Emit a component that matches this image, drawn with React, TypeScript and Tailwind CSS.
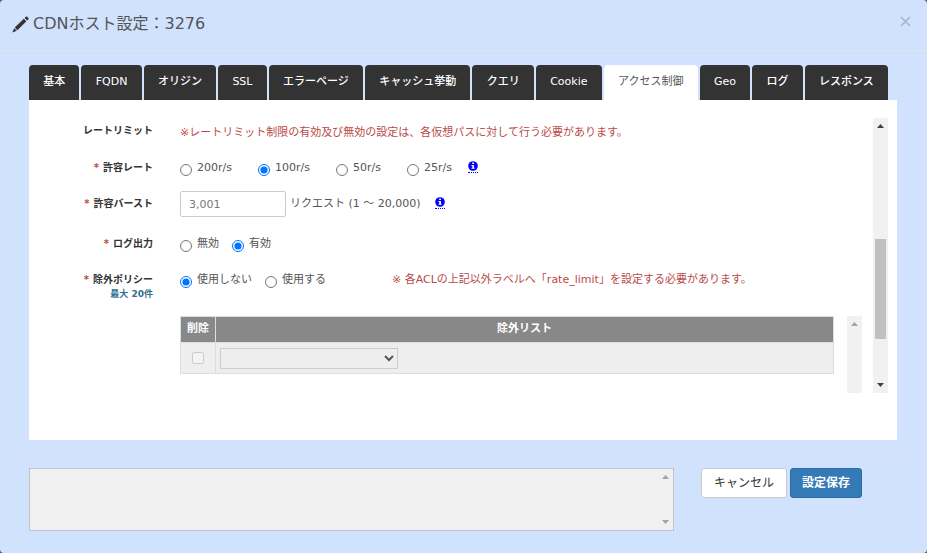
import React from 'react';

const tabs = [
  '基本',
  'FQDN',
  'オリジン',
  'SSL',
  'エラーページ',
  'キャッシュ挙動',
  'クエリ',
  'Cookie',
  'アクセス制御',
  'Geo',
  'ログ',
  'レスポンス',
];

const rates = ['200r/s', '100r/s', '50r/s', '25r/s'];

const PencilIcon = () => (
  <svg viewBox="0 0 17 17" className="w-[17px] h-[17px] shrink-0" fill="#333" aria-hidden="true">
    <path d="M12.600 1.900 13.800.7q.7-.6 1.400 0l1.200 1.200q.6.7 0 1.400l-1.200 1.200z" />
    <path d="M11.800 2.700 14.400 5.300 5.400 14.200 2.800 11.600z" />
    <path d="M2.200 12.200 4.800 14.800.3 16.500z" />
  </svg>
);

const InfoIcon = ({ label }: { label: string }) => (
  <button type="button" aria-label={label} className="border-b border-dotted border-[#0000ff] pb-px">
    <svg viewBox="0 0 10 10" className="w-[10px] h-[10px]">
      <circle cx="5" cy="5" r="4.800" fill="#0000ff" />
      <path d="M4.200 1.500h1.700v1.500H4.200zM3.500 3.900h2.400v2.800h.8v1.100H3.500V6.700h.8V5h-.8z" fill="#fff" />
    </svg>
  </button>
);

const Arrow = ({ up, color }: { up?: boolean; color: string }) => (
  <svg viewBox="0 0 7 4" className="w-[7px] h-1" fill={color} aria-hidden="true">
    <path d={up ? 'M3.500 0 7 4H0z' : 'M0 0h7L3.500 4z'} />
  </svg>
);

interface FieldProps {
  label: string;
  required?: boolean;
  note?: string;
  htmlFor?: string;
  className: string;
  children: React.ReactNode;
}

const Field = ({ label, required, note, htmlFor, className, children }: FieldProps) => (
  <div className={`flex items-start pt-[5px] ${className}`}>
    <div className="w-[124px] shrink-0 text-right text-[10px] leading-4 font-bold text-[#333]">
      <label htmlFor={htmlFor}>
        {required && <span className="text-[#b94a48] mr-1">*</span>}
        {label}
      </label>
      {note && <p className="text-[9px] leading-3 text-[#31708f]">{note}</p>}
    </div>
    <div className="flex-1 min-w-0 ml-[27px]">{children}</div>
  </div>
);

const Radio = ({ name, label, checked }: { name: string; label: string; checked?: boolean }) => (
  <label className="flex items-start gap-[5px]">
    <input type="radio" name={name} defaultChecked={checked} className="w-3 h-3 mt-1" />
    <span>{label}</span>
  </label>
);

export default function App() {
  return (
    <div className="bg-[#555]">
      <div className="min-h-screen bg-[#d1e2ff] rounded-sm font-['DejaVu_Sans','Noto_Sans_CJK_JP',sans-serif] text-[11px] leading-4 text-[#555]">
        {/* Header */}
        <header className="flex items-center justify-between h-[51px] pl-3 pr-4 pb-0.5 border-b border-[#e5e5e5]">
          <h1 className="flex items-center gap-1 text-base leading-6">
            <PencilIcon />
            CDNホスト設定：3276
          </h1>
          <button type="button" aria-label="閉じる" className="pb-1.5">
            <svg viewBox="0 0 11 11" className="w-[11px] h-[11px]" stroke="#a7b5cc" strokeWidth="1.600">
              <path d="M1 1l9 9M10 1l-9 9" />
            </svg>
          </button>
        </header>

        <main className="pl-[29px] pr-[30px] pt-3.5">
          {/* Tabs */}
          <nav className="flex gap-0.5 mr-[9px]">
            {tabs.map((tab) => (
              <button
                key={tab}
                type="button"
                className={`flex-auto h-[35px] pb-0.5 rounded-t whitespace-nowrap ${
                  tab === 'アクセス制御' ? 'bg-white text-[#555]' : 'bg-[#333] text-white font-medium'
                }`}
              >
                {tab}
              </button>
            ))}
          </nav>

          <section className="bg-white flex pt-[18px] pb-[47px] pr-[9px]">
            <div className="flex-1 min-w-0">
              <Field label="レートリミット" className="h-[37px]">
                <p className="text-[#b94a48] pt-0.5">
                  ※レートリミット制限の有効及び無効の設定は、各仮想パスに対して行う必要があります。
                </p>
              </Field>

              <Field label="許容レート" required className="h-9">
                <div className="flex gap-[26px]">
                  {rates.map((rate) => (
                    <Radio key={rate} name="rate" label={rate} checked={rate === '100r/s'} />
                  ))}
                  <div className="-ml-2.5">
                    <InfoIcon label="許容レートについて" />
                  </div>
                </div>
              </Field>

              <Field label="許容バースト" required htmlFor="burst" className="h-10">
                <div className="flex items-center gap-1 -mt-[5px]">
                  <input
                    id="burst"
                    type="text"
                    defaultValue="3,001"
                    className="w-[106px] h-[26px] px-2 border border-[#ccc] rounded-xs bg-white text-[#777]"
                  />
                  <span>リクエスト (1 ～ 20,000)</span>
                  <div className="ml-2.5">
                    <InfoIcon label="許容バーストについて" />
                  </div>
                </div>
              </Field>

              <Field label="ログ出力" required className="h-9">
                <div className="flex gap-[13px]">
                  <Radio name="log" label="無効" />
                  <Radio name="log" label="有効" checked />
                </div>
              </Field>

              <Field label="除外ポリシー" required note="最大 20件" className="h-[49px]">
                <div className="flex gap-[13px]">
                  <Radio name="policy" label="使用しない" checked />
                  <Radio name="policy" label="使用する" />
                  <p className="text-[#b94a48] ml-[53px]">
                    ※ 各ACLの上記以外ラベルへ「rate_limit」を設定する必要があります。
                  </p>
                </div>
              </Field>

              {/* Exclusion list */}
              <div className="flex items-start justify-between ml-[151px] mr-[11px]">
                <table className="flex-1 mr-[13px] border-collapse">
                  <thead>
                    <tr className="h-[26px] bg-[#888] text-white">
                      <th className="w-[35px] pb-0.5 border border-[#ddd] font-bold whitespace-nowrap">削除</th>
                      <th className="pb-0.5 border border-[#ddd] font-bold">除外リスト</th>
                    </tr>
                  </thead>
                  <tbody>
                    <tr className="h-[31px] bg-[#eee]">
                      <td className="border border-[#ddd] text-center">
                        <input type="checkbox" disabled aria-label="削除" className="block mx-auto w-3 h-3" />
                      </td>
                      <td className="border border-[#ddd] px-1">
                        <select
                          disabled
                          aria-label="除外リスト"
                          className="block w-[178px] h-[21px] border border-[#ccc] bg-[#eee]"
                        />
                      </td>
                    </tr>
                  </tbody>
                </table>
                <div className="w-[15px] h-[77px] bg-[#f1f1f1] flex flex-col items-center pt-1.5">
                  <Arrow up color="#a3a3a3" />
                </div>
              </div>
            </div>

            {/* Scrollbar */}
            <div className="w-[15px] bg-[#f1f1f1] flex flex-col items-center py-1.5">
              <Arrow up color="#404040" />
              <div className="w-[11px] h-[100px] mt-auto mb-11 bg-[#c1c1c1]" />
              <Arrow color="#404040" />
            </div>
          </section>
        </main>

        {/* Footer */}
        <footer className="mx-4 mt-3.5 border-t border-[#dfe1e8] pl-[13px] pt-[13px] flex items-start">
          <div className="relative flex-1">
            <textarea
              readOnly
              aria-label="メッセージ"
              className="block w-full h-[63px] resize-none border border-[#c4c4c4] bg-[#f0f0f0]"
            />
            <div className="absolute inset-y-0 right-[5px] flex flex-col justify-between py-[7px]">
              <Arrow up color="#a3a3a3" />
              <Arrow color="#a3a3a3" />
            </div>
          </div>
          <div className="flex gap-[3px] ml-[27px] mr-[49px] text-xs">
            <button type="button" className="h-[30px] px-3 rounded-[3px] border border-[#ccc] bg-white text-[#333]">
              キャンセル
            </button>
            <button
              type="button"
              className="h-[30px] px-[11px] rounded-[3px] border border-[#2e6da4] bg-[#337ab7] text-white font-bold"
            >
              設定保存
            </button>
          </div>
        </footer>
      </div>
    </div>
  );
}
